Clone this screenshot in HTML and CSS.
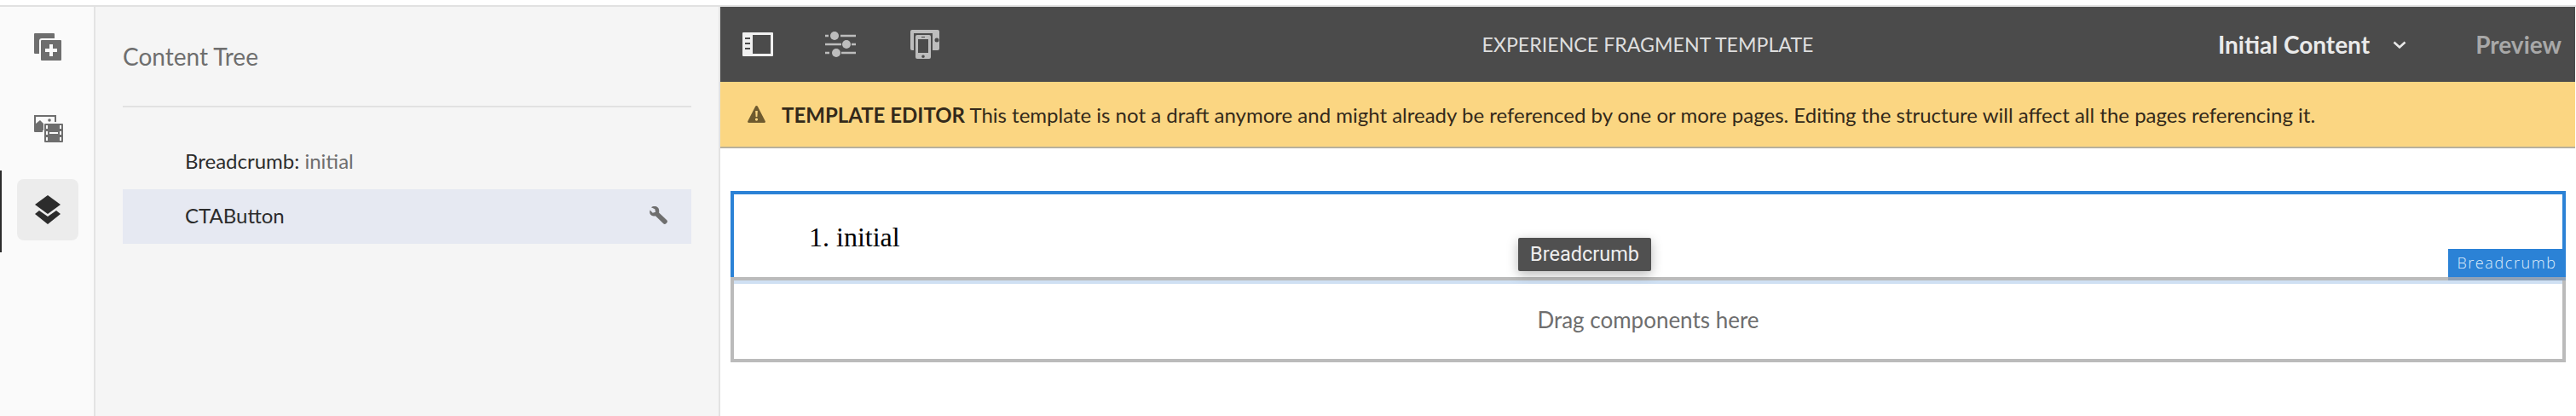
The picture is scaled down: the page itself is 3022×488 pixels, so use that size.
FILE: index.html
```html
<!DOCTYPE html>
<html lang="en">
<head>
<meta charset="utf-8">
<title>Experience Fragment Template</title>
<link rel="stylesheet" href="styles.css">
</head>
<body>
<div class="app">
  <nav class="rail">
    <button class="rail-btn rail-btn-1" aria-label="Components">
      <svg class="ico" width="32" height="32" viewBox="0 0 32 32"><path class="g" d="M1 0h22a1 1 0 0 1 1 1v5H9a3 3 0 0 0-3 3v15H1a1 1 0 0 1-1-1V1a1 1 0 0 1 1-1z"/><path class="g" fill-rule="evenodd" d="M9 8h22a1 1 0 0 1 1 1v22a1 1 0 0 1-1 1H9a1 1 0 0 1-1-1V9a1 1 0 0 1 1-1zm9 5v5h-5v4h5v5h4v-5h5v-4h-5v-5z"/></svg>
    </button>
    <button class="rail-btn rail-btn-2" aria-label="Assets">
      <svg class="ico" width="34" height="32" viewBox="0 0 34 32"><path class="g" d="M0 0h26v8h-2V2H2v8l5-4 4 4v8h-1v2H1a1 1 0 0 1-1-1z"/><circle class="g" cx="18" cy="6" r="1.8"/><path class="g" fill-rule="evenodd" d="M13 10h20a1 1 0 0 1 1 1v20a1 1 0 0 1-1 1H13a1 1 0 0 1-1-1V11a1 1 0 0 1 1-1zm1 2v4h2v-4zm16 0v4h2v-4zM14 19v4h2v-4zm16 0v4h2v-4zM14 26v4h2v-4zm16 0v4h2v-4z"/><path class="w" d="M18 20h10v2H18z"/></svg>
    </button>
    <div class="rail-active">
      <button class="rail-btn rail-btn-3" aria-label="Content Tree">
        <svg width="30" height="34" viewBox="0 0 30 34"><path class="d" d="M15 0l15 11-15 11L0 11z"/><path class="d" d="M5 18l10 7 10-7 5 4-15 12L0 22z"/></svg>
      </button>
    </div>
  </nav>

  <aside class="panel">
    <h2 class="panel-title">Content Tree</h2>
    <ul class="tree">
      <li class="tree-row"><span class="tree-name">Breadcrumb:</span>&nbsp;<span class="tree-sub">initial</span></li>
      <li class="tree-row tree-row-on"><span class="tree-name">CTAButton</span>
        <svg class="wrench" width="21" height="21" viewBox="0 0 21 21"><path class="g2" d="M8.500.6C6 -.3 3.500.1 1.900 1.300L6.300 3.200 7 6.800 3.700 7.800.6 4.500C-.3 7 .3 9.600 2.400 10.800c1.400.8 3 .9 4.500.4l9.300 9c1 .9 2.100 1 3.200 0l.9-.9c.9-1 .9-2.100 0-3L11.100 7.400c.5-2.900-.2-5.600-2.600-6.800z"/></svg>
      </li>
    </ul>
  </aside>

  <main class="main">
    <header class="toolbar">
      <div class="tools">
        <svg class="tool" width="36" height="28" viewBox="0 0 36 28"><path class="lt" fill-rule="evenodd" d="M1 0h34a1 1 0 0 1 1 1v26a1 1 0 0 1-1 1H1a1 1 0 0 1-1-1V1a1 1 0 0 1 1-1zm11 3v22h21V3zM3 6v2h6V6zm0 6v2h6v-2zm0 6v2h6v-2z"/></svg>
        <svg class="tool tool-sliders" width="36" height="30" viewBox="0 0 36 30"><g class="sl"><path d="M0 5h4M18 5h18M0 15h19M31 15h5M0 25h5M19 25h17"/></g><circle class="md" cx="11" cy="5" r="5"/><circle class="md" cx="25" cy="15" r="5"/><circle class="md" cx="13" cy="25" r="5"/></svg>
        <svg class="tool tool-device" width="34" height="34" viewBox="0 0 34 34"><rect class="md" width="34" height="24" rx="2"/><rect class="dk" x="4" y="4" width="22" height="30"/><circle class="dk" cx="31" cy="12" r="2.500"/><path class="md" fill-rule="evenodd" d="M8 6h14a2 2 0 0 1 2 2v24a2 2 0 0 1-2 2H8a2 2 0 0 1-2-2V8a2 2 0 0 1 2-2zm1 5v16h12V11zm4-3v1h4V8zm2 21.500a1.800 1.800 0 1 0 0 3.600 1.800 1.800 0 0 0 0-3.600z"/></svg>
      </div>
      <div class="toolbar-title">EXPERIENCE FRAGMENT TEMPLATE</div>
      <div class="modes">
        <span class="mode">Initial Content</span>
        <svg class="chev" width="16" height="9" viewBox="0 0 16 9"><path d="M1.500 1.500L8 7.500l6.500-6" /></svg>
        <span class="preview">Preview</span>
      </div>
    </header>
    <div class="banner">
      <svg class="warn" width="21" height="20" viewBox="0 0 21 20"><path fill-rule="evenodd" class="br" d="M10.500 0c.6 0 1 .3 1.300.8l9 17.500c.4.800-.1 1.700-1 1.700H1.200c-.9 0-1.400-.9-1-1.700L9.200.8c.3-.5.700-.8 1.300-.8zM9.200 6l.4 7h1.800l.4-7zm1.300 8.500a1.600 1.600 0 1 0 0 3.200 1.600 1.600 0 0 0 0-3.200z"/></svg>
      <p class="banner-text"><strong>TEMPLATE EDITOR</strong> This template is not a draft anymore and might already be referenced by one or more pages. Editing the structure will affect all the pages referencing it.</p>
    </div>
    <section class="canvas">
      <div class="comp">
        <ol class="crumbs"><li>initial</li></ol>
        <span class="comp-label">Breadcrumb</span>
        <span class="tooltip">Breadcrumb</span>
      </div>
      <div class="drop">Drag components here</div>
    </section>
  </main>
</div>
</body>
</html>
```
FILE: styles.css
```css
* { box-sizing: border-box; }
html, body { margin: 0; padding: 0; height: 100%; background: #fff; overflow: hidden; }
body { font-family: "Lato", "Liberation Sans", sans-serif; padding-top: 6px; }

.app { display: flex; height: 482px; border-top: 2px solid #e1e1e1; }

.rail { width: 112px; flex: none; background: #fafafa; border-right: 2px solid #e3e3e3; display: flex; flex-direction: column; align-items: flex-start; position: relative; }
.rail-btn { border: 0; padding: 0; background: none; display: flex; }
.rail-btn-1 { margin: 31px 0 0 40px; }
.rail-btn-2 { margin: 64px 0 0 40px; }
.rail-active { margin-top: 33px; width: 92px; height: 96px; border-left: 2px solid #2c2c2c; padding: 10px 0 0 18px; }
.rail-btn-3 { width: 72px; height: 72px; background: #ececec; border-radius: 8px; align-items: center; justify-content: center; }

.g { fill: #6e6e6e; }
.g2 { fill: #6e6e6e; }
.w { fill: #fafafa; }
.d { fill: #2c2c2c; }
.lt { fill: #f0f0f0; }
.md { fill: #bdbdbd; }
.dk { fill: #4b4b4b; }
.sl { stroke: #bdbdbd; stroke-width: 2.500; fill: none; }

.panel { width: 733px; flex: none; background: #f5f5f5; border-right: 2px solid #e3e3e3; padding: 0 32px; }
.panel-title { margin: 0; height: 118px; padding-top: 40px; font-size: 28px; line-height: 36px; font-weight: 400; color: #6e6e6e; border-bottom: 2px solid #e1e1e1; }
.tree { list-style: none; margin: 32px 0 0; padding: 0; }
.tree-row { height: 64px; padding: 0 0 4px 73px; display: flex; align-items: center; font-size: 24px; }
.tree-name { color: #2c2c2c; }
.tree-sub { color: #6e6e6e; }
.tree-row-on { background: #e6e9f2; justify-content: space-between; padding-right: 28px; }

.main { flex: 1; min-width: 0; display: flex; flex-direction: column; background: #fff; margin-right: 1px; }

.toolbar { height: 88px; flex: none; background: #4b4b4b; display: flex; align-items: center; position: relative; padding: 0 16px 0 26px; }
.tools { display: flex; align-items: center; gap: 61px; }
.tool-device { margin-left: 3px; }
.toolbar-title { position: absolute; left: 0; right: 0; top: 0; height: 88px; line-height: 88px; text-align: center; font-size: 23.200px; color: #dedede; }
.modes { margin-left: auto; display: flex; align-items: center; position: relative; }
.mode { font-size: 28px; font-weight: 700; color: #eaeaea; }
.chev { margin: 0 81px 0 27px; fill: none; stroke: #eaeaea; stroke-width: 2.500; }
.preview { font-size: 28px; font-weight: 700; color: #a8a8a8; }

.banner { height: 76px; flex: none; background: #fbd682; display: flex; align-items: center; padding-left: 32px; box-shadow: 0 2px 0 #b8b09c; position: relative; }
.br { fill: #6e5a2e; }
.warn { margin-right: 19px; }
.banner-text { margin: 0; font-size: 24px; color: #33291a; white-space: nowrap; }
.banner-text strong { font-weight: 700; }

.canvas { padding: 52px 11px 0 12px; }
.comp { height: 101px; border: 4px solid #2b82d6; border-bottom: 0; position: relative; }
.crumbs { margin: 0; padding: 32px 0 0 120px; font-family: "Liberation Serif", serif; font-size: 32px; line-height: 37px; color: #000; }
.comp-label { position: absolute; right: -4px; bottom: -4px; width: 138px; height: 37px; background: #2b82d6; border-bottom: 4px solid #8fa2b8; color: #dcecfb; font-family: "Open Sans", sans-serif; font-weight: 300; font-size: 18px; line-height: 33px; letter-spacing: 1.600px; text-align: center; z-index: 2; }
.tooltip { position: absolute; left: 920px; top: 51px; width: 156px; height: 39px; background: #505050; border-radius: 2px; color: #eee; font-family: "Roboto", sans-serif; font-size: 23.500px; line-height: 39px; text-align: center; box-shadow: 0 4px 14px rgba(0,0,0,.28); z-index: 2; }
.drop { height: 100px; border: 4px solid #bbb; box-shadow: inset 0 4px 0 #cfe0f3; display: flex; align-items: center; justify-content: center; font-size: 26px; color: #6e6e6e; }
```
